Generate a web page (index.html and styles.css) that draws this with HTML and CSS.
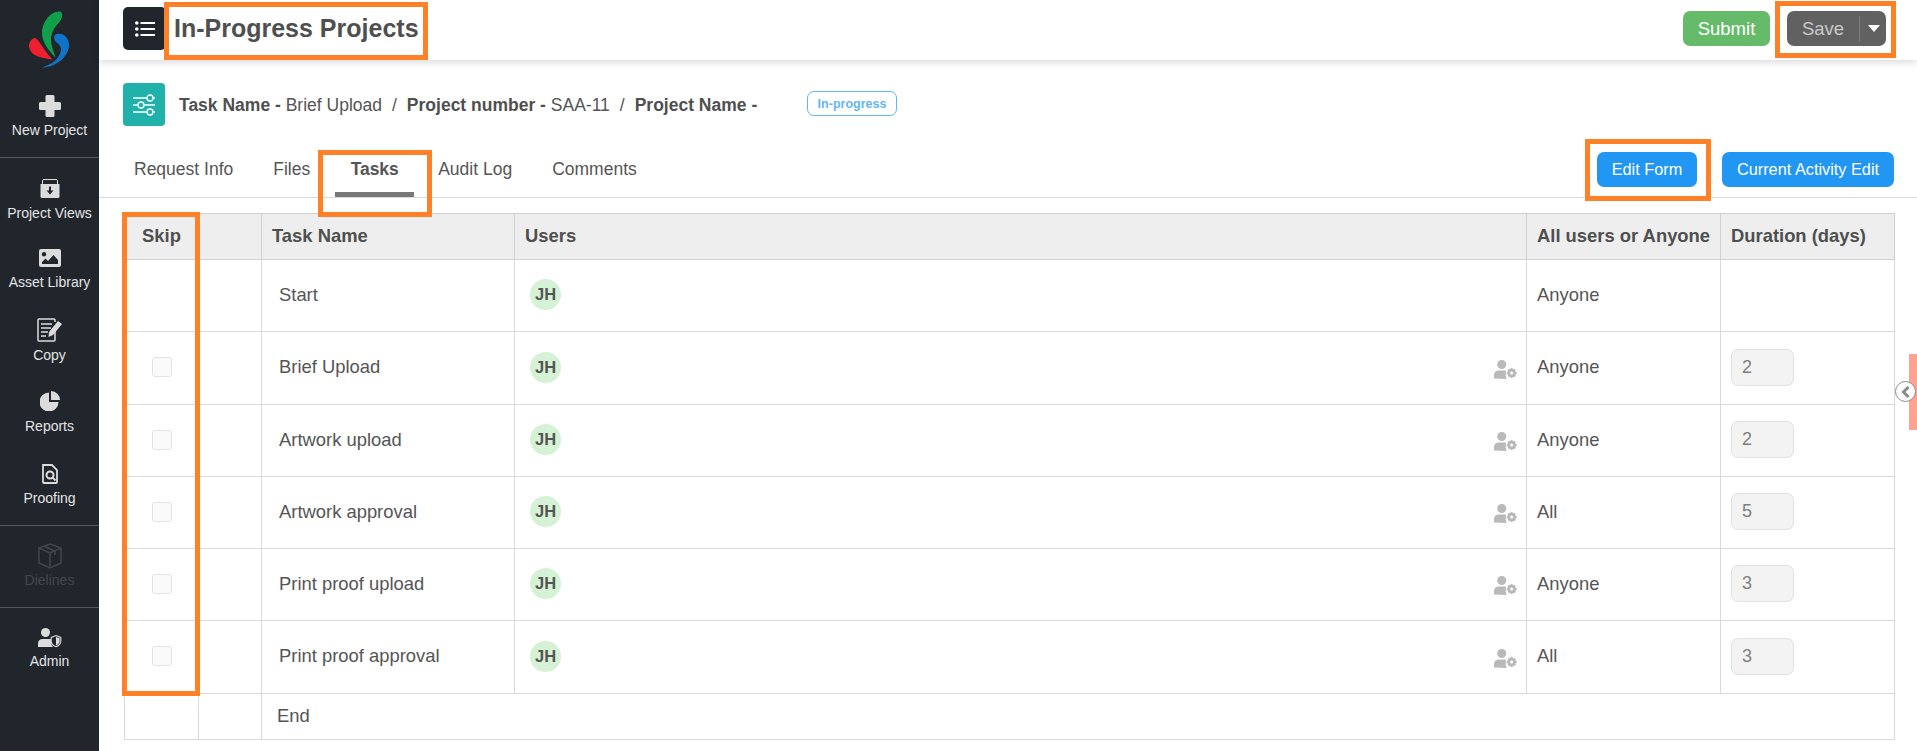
FILE: index.html
```html
<!DOCTYPE html>
<html lang="en">
<head>
<meta charset="utf-8">
<title>In-Progress Projects</title>
<link rel="stylesheet" href="styles.css">
</head>
<body>
<div class="app">
  <aside class="sidebar">
    <div class="logo">
      <svg width="44" height="60" viewBox="28 10 44 60">
        <path fill="#10a04c" d="M60 11.500C63.500 12.500 62.500 19 59 22.500C54 27.500 51 33 51 40C51 46 54 52 55.500 57.500C48 50 42 42 42 33C42 22 51 10.500 60 11.500Z"/>
        <path fill="#ee2030" d="M35 38C40 41 42 48 52.500 59.500C42 58 30 56.500 29 46C29 42 32 38 35 38Z"/>
        <path fill="#0f74c6" d="M57 34C64 33 69 38 69 45C69 57 55 67.500 42 67.500C51 65 61 58 61 49C61 44 55 43 54 38C54 36 55 34 57 34Z"/>
      </svg>
    </div>
    <a class="nav-item nav-first">
      <svg class="nav-icon" width="22" height="22" viewBox="0 0 22 22"><path fill="#dcdcdc" d="M8 0h6a1.500 1.500 0 0 1 1.500 1.500V7h5A1.500 1.500 0 0 1 22 8.500v5a1.500 1.500 0 0 1-1.500 1.500h-5v5.500A1.500 1.500 0 0 1 14 22H8a1.500 1.500 0 0 1-1.500-1.500V15h-5A1.500 1.500 0 0 1 0 13.500v-5A1.500 1.500 0 0 1 1.500 7h5V1.500A1.500 1.500 0 0 1 8 0z"/></svg>
      <span>New Project</span>
    </a>
    <div class="nav-rule"></div>
    <a class="nav-item nav-views">
      <svg class="nav-icon" width="20" height="20" viewBox="0 0 20 20"><path fill="none" stroke="#dcdcdc" stroke-width="1" d="M2.500 5V2a1.500 1.500 0 0 1 1.500-1.500h12A1.500 1.500 0 0 1 17.500 2v3"/><path fill="#dcdcdc" fill-rule="evenodd" d="M.5 5h19v12.500a1.500 1.500 0 0 1-1.500 1.500H2a1.500 1.500 0 0 1-1.500-1.500zM9 7.500v4H6.500L10 15.500l3.500-4H11v-4z"/></svg>
      <span>Project Views</span>
    </a>
    <a class="nav-item nav-asset">
      <svg class="nav-icon" width="22" height="18" viewBox="0 0 22 18"><path fill="#dcdcdc" fill-rule="evenodd" d="M2 0h18a2 2 0 0 1 2 2v14a2 2 0 0 1-2 2H2a2 2 0 0 1-2-2V2a2 2 0 0 1 2-2zm3 3a2.200 2.200 0 1 0 0 4.400A2.200 2.200 0 0 0 5 3zM3 15h16v-4l-4.500-5-5.500 6-2.500-2.500L3 13z"/></svg>
      <span>Asset Library</span>
    </a>
    <a class="nav-item nav-copy">
      <svg class="nav-icon" width="26" height="24" viewBox="0 0 26 24"><path fill="none" stroke="#dcdcdc" stroke-width="1.500" d="M18 9v13a1 1 0 0 1-1 1H2a1 1 0 0 1-1-1V2a1 1 0 0 1 1-1h15a1 1 0 0 1 1 1v2"/><path stroke="#dcdcdc" stroke-width="1.600" d="M4 6h11M4 10h10M4 14h7M4 18h5"/><path fill="#dcdcdc" d="M21 3l4 3-9 11-4.500 2 .5-5z"/></svg>
      <span>Copy</span>
    </a>
    <a class="nav-item nav-reports">
      <svg class="nav-icon" width="20" height="20" viewBox="0 0 20 20"><path fill="#dcdcdc" d="M9 1.500V11h9.500A9.500 9.500 0 1 1 9 1.500z"/><path fill="#dcdcdc" d="M11 0a9 9 0 0 1 9 9h-9z"/></svg>
      <span>Reports</span>
    </a>
    <a class="nav-item nav-proof">
      <svg class="nav-icon" width="18" height="20" viewBox="0 0 18 20"><path fill="none" stroke="#dcdcdc" stroke-width="1.800" d="M2 1h9l5 5v12a1 1 0 0 1-1 1H3a1 1 0 0 1-1-1z"/><circle cx="9" cy="11" r="3.500" fill="none" stroke="#dcdcdc" stroke-width="2"/><path stroke="#dcdcdc" stroke-width="2" d="M11.500 13.500l3 3"/></svg>
      <span>Proofing</span>
    </a>
    <div class="nav-rule"></div>
    <a class="nav-item nav-die">
      <svg class="nav-icon" width="26" height="26" viewBox="0 0 26 26"><path fill="none" stroke="#41464c" stroke-width="1.500" d="M13 1l11 4v15l-11 5-11-5V5zM2 5l11 5 11-5M13 10v15M7 3l11 5v4"/></svg>
      <span>Dielines</span>
    </a>
    <div class="nav-rule"></div>
    <a class="nav-item nav-admin">
      <svg class="nav-icon" width="24" height="20" viewBox="0 0 24 20"><circle cx="7.500" cy="4.500" r="4.500" fill="#dcdcdc"/><path fill="#dcdcdc" d="M0 19v-3.500c0-3 2-4.500 4.500-4.500h7c.5 0 1 0 1.500.2V14c0 2 .8 3.600 2 5z"/><path fill="#21262d" stroke="#dcdcdc" stroke-width="1.100" d="M18 7.500l4.800 1.900V13c0 2.800-2.200 4.800-4.800 5.700-2.600-.9-4.800-2.900-4.800-5.700V9.400z"/><path fill="#dcdcdc" d="M18 9v8.500c2-.8 3.600-2.400 3.600-4.500v-2.700z"/></svg>
      <span>Admin</span>
    </a>
  </aside>

  <main class="main">
    <header class="topbar">
      <div class="topbar-left">
        <button class="menu-btn">
          <svg width="20" height="16" viewBox="0 0 20 16"><g fill="#fff"><circle cx="1.800" cy="2" r="1.800"/><circle cx="1.800" cy="8" r="1.800"/><circle cx="1.800" cy="14" r="1.800"/><rect x="5.500" y="1" width="14.500" height="2"/><rect x="5.500" y="7" width="14.500" height="2"/><rect x="5.500" y="13" width="14.500" height="2"/></g></svg>
        </button>
        <h1 class="page-title">In-Progress Projects</h1>
      </div>
      <div class="topbar-right">
        <button class="btn btn-green">Submit</button>
        <div class="btn-split">
          <span class="btn-split-label">Save</span>
          <span class="btn-split-caret"></span>
        </div>
      </div>
    </header>

    <section class="task-info">
      <span class="task-icon">
        <svg width="24" height="22" viewBox="0 0 24 22"><g fill="none" stroke="#fff" stroke-width="1.300"><path d="M1 4h14M21 4h2M1 11h5M12 11h11M1 18h14M21 18h2"/><circle cx="18" cy="4" r="3"/><circle cx="9" cy="11" r="3"/><circle cx="18" cy="18" r="3"/></g></svg>
      </span>
      <p class="crumbs"><b>Task Name -</b> Brief Upload<i>/</i><b>Project number -</b> SAA-11<i>/</i><b>Project Name -</b></p>
      <span class="status">In-progress</span>
    </section>

    <nav class="tabs">
      <a class="tab tab-req">Request Info</a>
      <a class="tab tab-files">Files</a>
      <a class="tab tab-tasks">Tasks</a>
      <a class="tab tab-audit">Audit Log</a>
      <a class="tab tab-comm">Comments</a>
      <div class="tab-actions">
        <button class="btn btn-blue">Edit Form</button>
        <button class="btn btn-blue">Current Activity Edit</button>
      </div>
    </nav>

    <div class="table-wrap">
      <table class="tasks">
        <colgroup>
          <col class="c-skip"><col class="c-blank"><col class="c-name"><col class="c-users"><col class="c-mode"><col class="c-dur">
        </colgroup>
        <thead>
          <tr><th class="th-skip">Skip</th><th></th><th>Task Name</th><th>Users</th><th>All users or Anyone</th><th>Duration (days)</th></tr>
        </thead>
        <tbody>
          <tr class="row-a"><td></td><td></td><td class="name">Start</td><td><span class="avatar">JH</span></td><td>Anyone</td><td></td></tr>
          <tr class="row-b"><td><span class="check"></span></td><td></td><td class="name">Brief Upload</td><td><div class="user-cell"><span class="avatar">JH</span><svg class="user-cog" width="23" height="19" viewBox="0 0 23 19"><use href="#cog"/></svg></div></td><td>Anyone</td><td><span class="num">2</span></td></tr>
          <tr class="row-a"><td><span class="check"></span></td><td></td><td class="name">Artwork upload</td><td><div class="user-cell"><span class="avatar">JH</span><svg class="user-cog" width="23" height="19" viewBox="0 0 23 19"><use href="#cog"/></svg></div></td><td>Anyone</td><td><span class="num">2</span></td></tr>
          <tr class="row-a"><td><span class="check"></span></td><td></td><td class="name">Artwork approval</td><td><div class="user-cell"><span class="avatar">JH</span><svg class="user-cog" width="23" height="19" viewBox="0 0 23 19"><use href="#cog"/></svg></div></td><td>All</td><td><span class="num">5</span></td></tr>
          <tr class="row-a"><td><span class="check"></span></td><td></td><td class="name">Print proof upload</td><td><div class="user-cell"><span class="avatar">JH</span><svg class="user-cog" width="23" height="19" viewBox="0 0 23 19"><use href="#cog"/></svg></div></td><td>Anyone</td><td><span class="num">3</span></td></tr>
          <tr class="row-b"><td><span class="check"></span></td><td></td><td class="name">Print proof approval</td><td><div class="user-cell"><span class="avatar">JH</span><svg class="user-cog" width="23" height="19" viewBox="0 0 23 19"><use href="#cog"/></svg></div></td><td>All</td><td><span class="num">3</span></td></tr>
          <tr class="row-end"><td></td><td></td><td class="end" colspan="4">End</td></tr>
        </tbody>
      </table>
    </div>

    <div class="side-tab"></div>
    <span class="side-toggle">
      <svg width="10" height="12" viewBox="0 0 10 12"><path fill="none" stroke="#8a8a8a" stroke-width="3" d="M7.500 1L2.500 6l5 5"/></svg>
    </span>
  </main>

  <div class="mark mark-title"></div>
  <div class="mark mark-save"></div>
  <div class="mark mark-tasks"></div>
  <div class="mark mark-edit"></div>
  <div class="mark mark-skip"></div>
</div>

<svg class="defs" width="0" height="0">
  <symbol id="cog" viewBox="0 0 23 19">
    <circle cx="7.700" cy="4.500" r="4.500" fill="#b9b9b9"/>
    <path fill="#b9b9b9" d="M0 18.500v-3.500c0-3 2-4.500 4.500-4.500h7c1.500 0 2.500.5 3 1.500l-3 3 1 3.500.5.500z"/>
    <circle cx="17.700" cy="13" r="6" fill="#fff"/>
    <circle cx="17.700" cy="13" r="2.900" fill="none" stroke="#b9b9b9" stroke-width="2.800"/>
    <path stroke="#b9b9b9" stroke-width="2" d="M17.700 8v2M17.700 16v2M12.700 13h2M20.700 13h2M14.200 9.500l1.400 1.400M19.800 15.100l1.400 1.400M14.200 16.500l1.400-1.400M19.800 10.900l1.400-1.400"/>
  </symbol>
</svg>
</body>
</html>
```

FILE: styles.css
```css
* { box-sizing: border-box; }
html, body { margin: 0; padding: 0; height: 100%; overflow: hidden; }
body { font-family: "Liberation Sans", Arial, sans-serif; color: #4f4f4f; background: #fff; }
.defs { position: absolute; }
.app { position: relative; display: flex; width: 1917px; height: 751px; overflow: hidden; }

.sidebar { width: 99px; flex: none; background: #21262d; display: flex; flex-direction: column; align-items: stretch; color: #e4e4e4; }
.logo { height: 73px; flex: none; display: flex; justify-content: center; align-items: flex-start; padding-top: 10px; padding-left: 1px; }
.nav-item { display: flex; flex-direction: column; align-items: center; flex: none; font-size: 14px; line-height: 16px; white-space: nowrap; }
.nav-icon { display: block; flex: none; }
.nav-first { padding-top: 22px; height: 84px; }
.nav-first span { margin-top: 5px; }
.nav-rule { height: 1px; flex: none; background: #54585d; }
.nav-views { padding-top: 21px; height: 80px; }
.nav-views span { margin-top: 6px; }
.nav-asset { padding-top: 11px; height: 69px; }
.nav-asset span { margin-top: 7px; }
.nav-copy { padding-top: 11px; height: 73px; }
.nav-copy span { margin-top: 5px; }
.nav-reports { padding-top: 11px; height: 73px; }
.nav-reports span { margin-top: 7px; }
.nav-proof { padding-top: 11px; height: 72px; }
.nav-proof span { margin-top: 6px; }
.nav-die { color: #41464c; padding-top: 17px; height: 81px; }
.nav-die span { margin-top: 3px; }
.nav-admin { padding-top: 20px; }
.nav-admin span { margin-top: 5px; }

.main { position: relative; flex: 1; min-width: 0; display: flex; flex-direction: column; }
.topbar { height: 60px; flex: none; display: flex; justify-content: space-between; align-items: flex-start; padding: 7px 31px 0 24px; background: #fff; box-shadow: 0 2px 8px rgba(0,0,0,.16); }
.topbar-left { display: flex; align-items: center; }
.menu-btn { width: 43px; height: 43px; border: 0; border-radius: 5px; background: #21262d; display: flex; align-items: center; justify-content: center; padding: 0; }
.page-title { margin: 0 0 0 8px; font-size: 25px; line-height: 43px; font-weight: 700; color: #4f4f4f; white-space: nowrap; }
.topbar-right { display: flex; align-items: center; gap: 17px; padding-top: 4px; }
.btn { border: 0; border-radius: 7px; font-family: inherit; font-size: 16.300px; color: #fff; height: 35px; padding: 0; white-space: nowrap; }
.btn-green { background: #66bb6a; width: 87px; font-size: 18.500px; }
.btn-split { width: 99px; height: 35px; background: #616161; border-radius: 7px; display: flex; align-items: center; color: #c9c9c9; font-size: 18.500px; }
.btn-split-label { width: 73px; text-align: center; border-right: 1px solid #7c7c7c; line-height: 26px; }
.btn-split-caret { margin-left: 8px; width: 0; height: 0; border-left: 6px solid transparent; border-right: 6px solid transparent; border-top: 7px solid #fff; }

.task-info { display: flex; align-items: center; height: 43px; margin-top: 23px; padding-left: 24px; flex: none; }
.task-icon { width: 42px; height: 43px; border-radius: 4px; background: #20b2aa; display: flex; align-items: center; justify-content: center; flex: none; }
.crumbs { margin: 0 0 0 14px; font-size: 17.500px; line-height: 20px; color: #555; white-space: pre; width: 628px; position: relative; top: 0; }
.crumbs b { color: #4f4f4f; }
.crumbs i { font-style: normal; margin: 0 10px; }
.status { width: 90px; height: 25px; border: 1px solid #64b5f6; border-radius: 7px; color: #64b5f6; font-size: 12.500px; font-weight: 700; line-height: 25px; text-align: center; position: relative; top: -1px; }

.tabs { display: flex; align-items: stretch; height: 60px; margin-top: 12px; border-bottom: 1px solid #d9d9d9; padding-right: 23px; flex: none; position: relative; }
.tab { font-size: 17.500px; line-height: 20px; color: #555; padding-top: 21px; white-space: nowrap; }
.tab-req { margin-left: 35px; }
.tab-files { margin-left: 40px; }
.tab-tasks { width: 79px; text-align: center; font-weight: 700; border-bottom: 5px solid #777; height: 59px; margin-left: 25px; letter-spacing: -.1px; }
.tab-audit { margin-left: 24px; }
.tab-comm { margin-left: 40px; }
.tab-actions { margin-left: auto; display: flex; gap: 25px; padding-top: 14px; }
.tab-actions .btn { background: #2196f3; }
.tab-actions .btn:first-child { width: 100px; }
.tab-actions .btn:last-child { width: 172px; }

.table-wrap { padding: 15px 0 0 25px; flex: none; }
.tasks { width: 1770px; border-collapse: collapse; table-layout: fixed; font-size: 18.400px; color: #555; }
.tasks th, .tasks td { border: 1px solid #d9d9d9; padding: 0 10px 2px; text-align: left; vertical-align: middle; white-space: nowrap; }
.tasks th { height: 46px; background: #eee; font-weight: 700; color: #4f4f4f; border-color: #d0d0d0; }
.c-skip { width: 74px; } .c-blank { width: 63px; } .c-name { width: 253px; } .c-users { width: 1012px; } .c-mode { width: 194px; } .c-dur { width: 174px; }
.tasks .th-skip { text-align: center; }
.row-a td { height: 72px; } .row-b td { height: 73px; }
.row-end td { height: 46px; }
.tasks .name { padding-left: 17px; }
.tasks .end { padding-left: 15px; }
.avatar { display: inline-flex; width: 31px; height: 31px; border-radius: 50%; background: #d5f2d5; color: #555; font-size: 16.500px; font-weight: 700; align-items: center; justify-content: center; margin-left: 5px; vertical-align: middle; }
.user-cell { display: flex; justify-content: space-between; align-items: center; }
.user-cog { margin-right: -1px; margin-top: 4px; }
.check { display: block; width: 20px; height: 20px; margin: 0 auto; border: 1px solid #e3e3e3; border-radius: 3px; background: #fafafa; }
.num { display: block; width: 63px; height: 37px; border: 1px solid #e0e0e0; border-radius: 7px; background: #f3f3f3; color: #808080; font-size: 18px; line-height: 35px; padding-left: 10px; }

.side-tab { position: absolute; left: 1810px; top: 354px; width: 8px; height: 76px; background: #ffa28f; }
.side-toggle { position: absolute; left: 1796px; top: 381px; width: 21px; height: 21px; border-radius: 50%; border: 1px solid #8a8a8a; background: #fff; display: flex; align-items: center; justify-content: center; }

.mark { position: absolute; border: 5px solid #ff8026; pointer-events: none; }
.mark-title { left: 164px; top: 2px; width: 264px; height: 58px; }
.mark-save { left: 1775px; top: 1px; width: 121px; height: 57px; }
.mark-tasks { left: 318px; top: 150px; width: 114px; height: 67px; }
.mark-edit { left: 1585px; top: 139px; width: 126px; height: 62px; }
.mark-skip { left: 122px; top: 212px; width: 78px; height: 484px; }
```
